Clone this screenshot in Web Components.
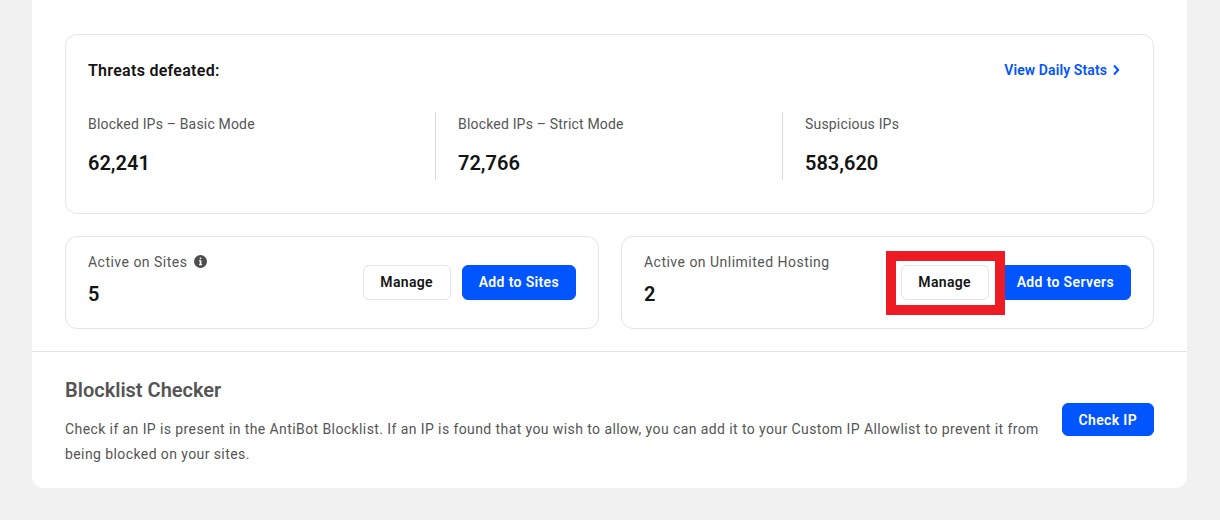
<!DOCTYPE html>
<html>
<head>
<meta charset="utf-8">
<style>
html, body { margin: 0; background: #f1f1f1; }
body { font-family: Roboto, "Liberation Sans", sans-serif; }
</style>
</head>
<body>
<settings-page>
    <stats-card>
        <stat-item label="Blocked IPs – Basic Mode" value="62,241"></stat-item>
        <stat-item label="Blocked IPs – Strict Mode" value="72,766"></stat-item>
        <stat-item label="Suspicious IPs" value="583,620"></stat-item>
    </stats-card>
    <div slot="active" style="display:grid;grid-template-columns:534px 533px;gap:22px">
        <active-card label="Active on Sites" value="5" info>
            <ui-button>Manage</ui-button>
            <ui-button primary>Add to Sites</ui-button>
        </active-card>
        <active-card label="Active on Unlimited Hosting" value="2">
            <ui-button highlight>Manage</ui-button>
            <ui-button primary>Add to Servers</ui-button>
        </active-card>
    </div>
    <blocklist-checker slot="footer"></blocklist-checker>
</settings-page>
<script>
class SettingsPage extends HTMLElement{
    constructor(){
        super()
        this.attachShadow({mode: "open"})
        this.shadowRoot.innerHTML = `
        <style>
            :host{ display: block; padding: 0 33px 32px 32px; }
            .panel{
                background: #fff;
                border-radius: 0 0 12px 12px;
                height: 488px;
                box-sizing: border-box;
            }
            .top{ padding: 34px 33px 22px 33px; display: flex; flex-direction: column; gap: 22px; border-bottom: 1px solid #e2e2e2; }
        </style>
        <div class="panel">
            <div class="top">
                <slot></slot>
                <slot name="active"></slot>
            </div>
            <slot name="footer"></slot>
        </div>`
    }
}
customElements.define('settings-page', SettingsPage)

class StatsCard extends HTMLElement{
    constructor(){
        super()
        this.attachShadow({mode: "open"})
        this.shadowRoot.innerHTML = `
        <style>
            :host{
                display: block;
                height: 180px;
                box-sizing: border-box;
                border: 1px solid #e4e4e4;
                border-radius: 12px;
                padding: 25px 22px 0 22px;
            }
            .head{ display: flex; justify-content: space-between; align-items: center; height: 20px; padding-right: 11px; }
            h3{ margin: 0; font-size: 16px; font-weight: 600; color: #141414; letter-spacing: .28px; }
            a{ display: flex; align-items: center; gap: 5px; font-size: 14px; font-weight: 600; color: #0055ff; letter-spacing: .1px; text-decoration: none; }
            svg{ display: block; }
            .stats{ display: grid; grid-template-columns: 347px 347px 1fr; margin-top: 32px; height: 68px; }
        </style>
        <div class="head">
            <h3>Threats defeated:</h3>
            <a href="#">View Daily Stats
                <svg width="8" height="12" viewBox="0 0 8 12" fill="none"><path d="M2 1.5 6.2 6 2 10.5" stroke="#0055ff" stroke-width="2"/></svg>
            </a>
        </div>
        <div class="stats"><slot></slot></div>`
    }
}
customElements.define('stats-card', StatsCard)

class StatItem extends HTMLElement{
    constructor(){
        super()
        this.attachShadow({mode: "open"})
        this.shadowRoot.innerHTML = `
        <style>
            :host{ display: block; padding-left: 22px; border-left: 1px solid #d9d9d9; }
            :host(:first-child){ padding-left: 0; border-left: 0; }
            .label{ font-size: 14px; line-height: 16px; margin-top: 4px; color: #555; letter-spacing: .18px; }
            .value{ font-size: 20px; line-height: 24px; font-weight: 600; margin-top: 19px; color: #141414; }
        </style>
        <div class="label"></div>
        <div class="value"></div>`
        this.shadowRoot.querySelector('.label').textContent = this.getAttribute('label')
        this.shadowRoot.querySelector('.value').textContent = this.getAttribute('value')
    }
}
customElements.define('stat-item', StatItem)

class ActiveCard extends HTMLElement{
    constructor(){
        super()
        this.attachShadow({mode: "open"})
        this.shadowRoot.innerHTML = `
        <style>
            :host{
                display: flex;
                justify-content: space-between;
                align-items: center;
                height: 93px;
                box-sizing: border-box;
                border: 1px solid #e4e4e4;
                border-radius: 12px;
                padding: 0 22px;
            }
            .label{ display: flex; align-items: center; gap: 7px; font-size: 14px; line-height: 16px; color: #555; letter-spacing: .48px; }
            .value{ font-size: 20px; line-height: 24px; font-weight: 600; margin-top: 12px; color: #141414; }
            .left{ margin-top: -6px; }
            .btns{ display: flex; gap: 11px; margin-top: -1px; }
            svg{ display: block; }
        </style>
        <div class="left">
            <div class="label"><span></span></div>
            <div class="value"></div>
        </div>
        <div class="btns"><slot></slot></div>`
        this.shadowRoot.querySelector('.label span').textContent = this.getAttribute('label')
        this.shadowRoot.querySelector('.value').textContent = this.getAttribute('value')
        if (this.hasAttribute('info'))
            this.shadowRoot.querySelector('.label').insertAdjacentHTML('beforeend', `
                <svg width="13" height="13" viewBox="0 0 13 13"><circle cx="6.5" cy="6.5" r="6.5" fill="#4d4d4d"/><rect x="5.6" y="2.4" width="1.8" height="1.8" rx=".9" fill="#fff"/><path d="M4.9 5.3h2.5v3.9h.8v1H4.9v-1h.8V6.3h-.8z" fill="#fff"/></svg>`)
    }
}
customElements.define('active-card', ActiveCard)

class UiButton extends HTMLElement{
    constructor(){
        super()
        this.attachShadow({mode: "open"})
        this.shadowRoot.innerHTML = `
        <style>
            :host{ display: block; position: relative; }
            button{
                display: block;
                height: var(--btn-height, 35px);
                min-width: 88px;
                box-sizing: border-box;
                padding: 0 16px;
                font: 600 14px Roboto, "Liberation Sans", sans-serif;
                letter-spacing: .35px;
                white-space: nowrap;
                color: #141414;
                background: #fff;
                border: 1px solid #e4e4e4;
                border-radius: 6px;
            }
            :host([primary]) button{ background: #0055ff; border-color: #0055ff; color: #fff; }
            /* red annotation frame from the screenshot */
            .mark{ position: absolute; z-index: 1; top: -14px; left: -15px; right: -16px; bottom: -15px; border: 10px solid #ed1c24; }
        </style>
        <button><slot></slot></button>`
        if (this.hasAttribute('highlight'))
            this.shadowRoot.appendChild(Object.assign(document.createElement('div'), {className: 'mark'}))
    }
}
customElements.define('ui-button', UiButton)

class BlocklistChecker extends HTMLElement{
    constructor(){
        super()
        this.attachShadow({mode: "open"})
        this.shadowRoot.innerHTML = `
        <style>
            :host{ display: flex; justify-content: space-between; align-items: center; padding: 26px 33px 0 33px; }
            h2{ margin: 0 0 15px; font-size: 20px; line-height: 24px; font-weight: 600; color: #555; }
            p{ margin: 0; font-size: 14px; line-height: 25px; color: #555; letter-spacing: .41px; width: 985px; }
            ui-button{ --btn-height: 33px; margin-bottom: 6px; }
        </style>
        <div>
            <h2>Blocklist Checker</h2>
            <p>Check if an IP is present in the AntiBot Blocklist. If an IP is found that you wish to allow, you can add it to your Custom IP Allowlist to prevent it from being blocked on your sites.</p>
        </div>
        <ui-button primary>Check IP</ui-button>`
    }
}
customElements.define('blocklist-checker', BlocklistChecker)
</script>
</body>
</html>
